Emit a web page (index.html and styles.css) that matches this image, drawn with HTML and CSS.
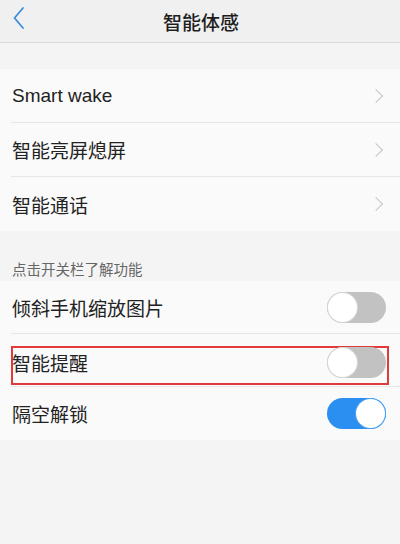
FILE: index.html
```html
<!doctype html>
<html lang="zh">
<head>
  <meta charset="utf-8">
  <title>智能体感</title>
  <meta name="viewport" content="width=device-width,initial-scale=1">
  <link rel="stylesheet" href="styles.css">
</head>
<body>
  <div class="topbar">
    <span class="back-btn">
      <svg width="14" height="24" viewBox="0 0 14 24"><path d="M11 2 L2.5 12 L11 22" fill="none" stroke="#3b8de0" stroke-width="1.8" stroke-linecap="round" stroke-linejoin="round"/></svg>
    </span>
    <h1>智能体感</h1>
  </div>

  <div class="group first">
    <div class="row"><span>Smart wake</span><i class="arrow"></i></div>
    <div class="row"><span>智能亮屏熄屏</span><i class="arrow"></i></div>
    <div class="row"><span>智能通话</span><i class="arrow"></i></div>
  </div>

  <p class="group-title">点击开关栏了解功能</p>

  <div class="group">
    <div class="row"><span>倾斜手机缩放图片</span><i class="switch"></i></div>
    <div class="row marked"><span>智能提醒</span><i class="switch"></i></div>
    <div class="row"><span>隔空解锁</span><i class="switch on"></i></div>
  </div>
</body>
</html>
```

FILE: styles.css
```css
* {
  box-sizing: border-box;
  margin: 0;
}
body {
  font-family: "Liberation Sans", "Noto Sans CJK SC", sans-serif;
  background: #f4f4f5;
  color: #222;
  height: 544px;
}

/* top bar */
.topbar {
  height: 43px;
  background: #f0f0f0;
  border-bottom: 1px solid #d8d8d8;
  display: flex;
  align-items: center;
  justify-content: center;
  position: relative;
}
.topbar h1 {
  font-family: "Noto Sans CJK SC", sans-serif;
  font-size: 19px;
  font-weight: 500;
  color: #1e1e1e;
  margin-left: 2px;
}
.back-btn {
  position: absolute;
  left: 12px;
  top: 6px;
  display: flex;
}

/* lists */
.group {
  background: #fafafa;
}
.group.first {
  margin-top: 26px;
}
.group-title {
  font-size: 14.5px;
  color: #666;
  padding: 27px 12px 4px;
  height: 50px;
}
.row {
  height: 54px;
  margin-left: 11px;
  padding-right: 14px;
  display: flex;
  align-items: center;
  justify-content: space-between;
  border-bottom: 1px solid #e6e6e6;
  font-size: 19px;
  position: relative;
}
.row:last-child { border-bottom: none; }
.row span { padding-left: 1px; }
.group:last-child .row { height: 53px; }

.row.marked span,
.row.marked .switch { margin-top: 5px; }
.row.marked::before {
  content: "";
  position: absolute;
  left: 0;
  right: 11px;
  top: 12px;
  bottom: 1px;
  border: 2px solid #e03a3a;
}

.arrow {
  width: 10px;
  height: 10px;
  border-top: 1.5px solid #c4c4c4;
  border-right: 1.5px solid #c4c4c4;
  transform: rotate(45deg);
  margin-right: 5px;
}

.switch {
  width: 59px;
  height: 31px;
  border-radius: 16px;
  background: #c2c2c2;
  position: relative;
}
.switch::after {
  content: "";
  position: absolute;
  left: 1px;
  top: 1px;
  width: 29px;
  height: 29px;
  border-radius: 50%;
  background: #fff;
  box-shadow: 0 0 0 1px #d6d6d6;
}
.switch.on { background: #2a8ff0; }
.switch.on::after {
  left: auto;
  right: 1px;
  box-shadow: 0 0 0 1px #4ea2f2;
}
```
